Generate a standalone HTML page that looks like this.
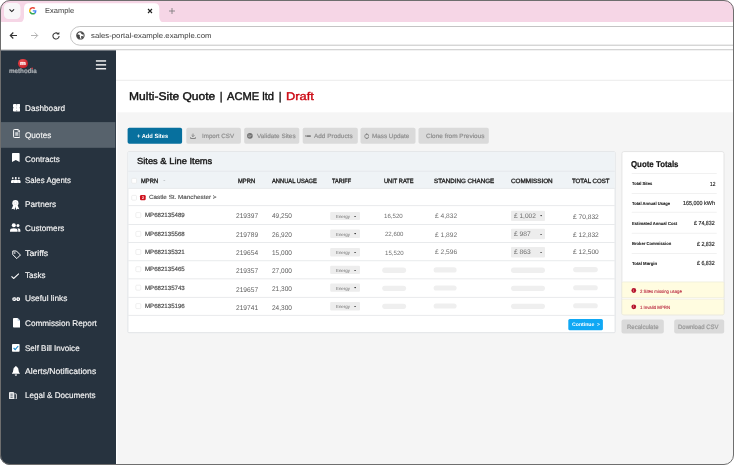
<!DOCTYPE html>
<html><head><meta charset="utf-8"><title>Example</title>
<style>
*{box-sizing:border-box;margin:0;padding:0}
html,body{width:734px;height:465px;overflow:hidden;background:#fff;font-family:"Liberation Sans",sans-serif;text-rendering:geometricPrecision}
.a{position:absolute}
.t{position:absolute;white-space:nowrap;transform-origin:0 0;line-height:0}
.t i{display:inline-block;width:0;height:20px}
#frame{will-change:transform;position:absolute;left:0;top:0;width:734px;height:465px;border-radius:10px;overflow:hidden;background:#fff}
#edge{position:absolute;left:0;top:0;width:734px;height:465px;border-radius:10px;border:1.2px solid #6e6e6e;border-bottom-width:1px;pointer-events:none}
</style></head><body>
<div id="frame">
<header id="browser-chrome">
<svg class="a" style="left:-1px;top:-1px" width="736" height="24"><rect x="1.00" y="1.00" width="734.00" height="22.00" rx="0.00" fill="#f6d6e6"/></svg>
<svg class="a" style="left:3px;top:2px" width="19" height="18"><rect x="1.00" y="1.00" width="16.50" height="16.00" rx="4.50" fill="#f8f7f8"/></svg>
<svg class="a" style="left:8.40px;top:8.20px" width="7.60" height="5.70" viewBox="0 0 8 6"><path d="M1.6 1.4 L4 3.8 L6.4 1.4" fill="none" stroke="#222" stroke-width="1.15"/></svg>
<svg class="a" style="left:0.00px;top:0.00px" width="200.00" height="23.00" viewBox="0 0 200 23"><path d="M18.5 22.5 Q24 22.5 24 17 V8.3 Q24 3.3 29 3.3 H154.3 Q159.3 3.3 159.3 8.3 V17 Q159.3 22.5 164.8 22.5 Z" fill="#fff"/></svg>
<svg class="a" style="left:29.40px;top:7.20px" width="7.60" height="7.60" viewBox="0 0 48 48"><path fill="#EA4335" d="M24 9.5c3.54 0 6.71 1.22 9.21 3.6l6.85-6.85C35.9 2.38 30.47 0 24 0 14.62 0 6.51 5.38 2.56 13.22l7.98 6.19C12.43 13.72 17.74 9.5 24 9.5z"/><path fill="#4285F4" d="M46.98 24.55c0-1.57-.15-3.09-.38-4.55H24v9.02h12.94c-.58 2.96-2.26 5.48-4.78 7.18l7.73 6c4.51-4.18 7.09-10.36 7.09-17.65z"/><path fill="#FBBC05" d="M10.53 28.59c-.48-1.45-.76-2.99-.76-4.59s.27-3.14.76-4.59l-7.98-6.19C.92 16.46 0 20.12 0 24c0 3.88.92 7.54 2.56 10.78l7.97-6.19z"/><path fill="#34A853" d="M24 48c6.48 0 11.93-2.13 15.89-5.81l-7.73-6c-2.15 1.45-4.92 2.3-8.16 2.3-6.26 0-11.57-4.22-13.47-9.91l-7.98 6.19C6.51 42.62 14.62 48 24 48z"/></svg>
<div class="t" style="left:44.60px;top:-7px;font-size:7.40px;transform:scaleX(1.0142);color:#3c3c3c;"><i></i>Example</div>
<svg class="a" style="left:147.00px;top:8.00px" width="6.00" height="6.00" viewBox="0 0 6 6"><path d="M1 1 L5 5 M5 1 L1 5" stroke="#222" stroke-width="1.1"/></svg>
<svg class="a" style="left:167.50px;top:7.00px" width="8.00" height="8.00" viewBox="0 0 8 8"><path d="M4 1 V7 M1 4 H7" stroke="#777" stroke-width="0.8"/></svg>
<svg class="a" style="left:-1px;top:21px" width="736" height="30"><rect x="1.00" y="1.00" width="734.00" height="27.30" rx="0.00" fill="#fff"/></svg>
<div class="a" style="left:0.00px;top:49.00px;width:734.00px;height:1.60px;background:linear-gradient(#cfcfcf,#e4e4e4)"></div>
<svg class="a" style="left:9.00px;top:31.00px" width="9.00" height="9.00" viewBox="0 0 9 9"><path d="M8 4.5 H1.5 M4.3 1.5 L1.3 4.5 L4.3 7.5" fill="none" stroke="#333" stroke-width="1.15"/></svg>
<svg class="a" style="left:29.50px;top:31.00px" width="9.00" height="9.00" viewBox="0 0 9 9"><path d="M1 4.5 H7.5 M4.7 1.5 L7.7 4.5 L4.7 7.5" fill="none" stroke="#aaa" stroke-width="0.9"/></svg>
<svg class="a" style="left:50.50px;top:30.50px" width="10.00" height="10.00" viewBox="0 0 10 10"><path d="M8.1 5 A3.1 3.1 0 1 1 7 2.6" fill="none" stroke="#333" stroke-width="1.05"/><path d="M5.6 3.6 H8.3 V0.9 Z" fill="#333"/></svg>
<svg class="a" style="left:69px;top:25px" width="712" height="22"><rect x="1.50" y="1.50" width="709.00" height="18.70" rx="9.35" fill="#fff" stroke="#c4c4c4" stroke-width="1.00"/></svg>
<svg class="a" style="left:75.90px;top:31.30px" width="8.80" height="8.80" viewBox="0 0 100 100"><circle cx="50" cy="50" r="42" fill="#fff" stroke="#444" stroke-width="12"/><path d="M14 36 C26 42 36 38 42 46 C48 54 38 60 44 68 C48 74 46 84 44 90 C24 86 10 68 10 50 Z" fill="#444"/><path d="M52 10 C46 22 60 24 62 32 C64 42 78 40 88 36 C82 20 68 10 52 10 Z" fill="#444"/><path d="M60 58 C70 54 80 58 84 66 C78 78 70 84 62 86 C58 76 56 66 60 58 Z" fill="#444"/></svg>
<div class="t" style="left:90.90px;top:18px;font-size:7.30px;transform:scaleX(1.0654);color:#3c3c3c;"><i></i>sales-portal-example.example.com</div>
</header>
<nav id="sidebar">
<svg class="a" style="left:-1px;top:49px" width="118" height="418"><rect x="1.00" y="1.40" width="116.00" height="415.60" rx="0.00" fill="#27333f"/></svg>
<svg class="a" style="left:-1px;top:121px" width="118" height="28"><rect x="1.00" y="1.10" width="115.30" height="25.70" rx="0.00" fill="#57626c"/></svg>
<div class="a" style="left:18.40px;top:58.70px;width:9.20px;height:9.20px;border-radius:50%;background:radial-gradient(circle at 40% 35%,#ee5a5a,#c8202a 70%)"></div>
<div class="t" style="left:20.10px;top:45px;font-size:5.60px;transform:scaleX(1.1648);color:#fff;font-weight:bold;-webkit-text-stroke:0.2px;"><i></i>m</div>
<div class="t" style="left:8.70px;top:53px;font-size:6.60px;transform:scaleX(0.9476);color:#a8adb2;font-weight:bold;-webkit-text-stroke:0.2px;"><i></i>methodia</div>
<svg class="a" style="left:30px;top:66px" width="4" height="4"><rect x="1.50" y="1.60" width="1.40" height="1.40" rx="0.00" fill="#d0323c"/></svg>
<svg class="a" style="left:94px;top:59px" width="14" height="4"><rect x="1.90" y="1.20" width="10.20" height="1.50" rx="0.00" fill="#ececec"/></svg>
<svg class="a" style="left:94px;top:63px" width="14" height="4"><rect x="1.90" y="1.10" width="10.20" height="1.50" rx="0.00" fill="#ececec"/></svg>
<svg class="a" style="left:94px;top:67px" width="14" height="4"><rect x="1.90" y="1.00" width="10.20" height="1.50" rx="0.00" fill="#ececec"/></svg>
<div class="t" style="left:25.00px;top:91px;font-size:8.20px;transform:scaleX(0.9971);color:#f6f6f6;-webkit-text-stroke:0.15px #f6f6f6;"><i></i>Dashboard</div>
<div class="t" style="left:25.00px;top:118px;font-size:8.20px;transform:scaleX(0.9948);color:#f6f6f6;-webkit-text-stroke:0.15px #f6f6f6;"><i></i>Quotes</div>
<div class="t" style="left:25.00px;top:142px;font-size:8.20px;transform:scaleX(0.9974);color:#f6f6f6;-webkit-text-stroke:0.15px #f6f6f6;"><i></i>Contracts</div>
<div class="t" style="left:25.00px;top:163px;font-size:8.20px;transform:scaleX(0.9610);color:#f6f6f6;-webkit-text-stroke:0.15px #f6f6f6;"><i></i>Sales Agents</div>
<div class="t" style="left:25.00px;top:187px;font-size:8.20px;transform:scaleX(1.0100);color:#f6f6f6;-webkit-text-stroke:0.15px #f6f6f6;"><i></i>Partners</div>
<div class="t" style="left:25.00px;top:211px;font-size:8.20px;transform:scaleX(0.9964);color:#f6f6f6;-webkit-text-stroke:0.15px #f6f6f6;"><i></i>Customers</div>
<div class="t" style="left:25.00px;top:236px;font-size:8.20px;transform:scaleX(1.0727);color:#f6f6f6;-webkit-text-stroke:0.15px #f6f6f6;"><i></i>Tariffs</div>
<div class="t" style="left:25.00px;top:258px;font-size:8.20px;transform:scaleX(0.9733);color:#f6f6f6;-webkit-text-stroke:0.15px #f6f6f6;"><i></i>Tasks</div>
<div class="t" style="left:25.00px;top:281px;font-size:8.20px;transform:scaleX(1.0113);color:#f6f6f6;-webkit-text-stroke:0.15px #f6f6f6;"><i></i>Useful links</div>
<div class="t" style="left:25.00px;top:306px;font-size:8.20px;transform:scaleX(1.0000);color:#f6f6f6;-webkit-text-stroke:0.15px #f6f6f6;"><i></i>Commission Report</div>
<div class="t" style="left:25.00px;top:331px;font-size:8.20px;transform:scaleX(0.9838);color:#f6f6f6;-webkit-text-stroke:0.15px #f6f6f6;"><i></i>Self Bill Invoice</div>
<div class="t" style="left:25.00px;top:354px;font-size:8.20px;transform:scaleX(1.0500);color:#f6f6f6;-webkit-text-stroke:0.15px #f6f6f6;"><i></i>Alerts/Notifications</div>
<div class="t" style="left:25.00px;top:378px;font-size:8.20px;transform:scaleX(0.9880);color:#f6f6f6;-webkit-text-stroke:0.15px #f6f6f6;"><i></i>Legal &amp; Documents</div>
<svg class="a" style="left:12.80px;top:104.20px" width="7.40" height="7.50" viewBox="0 0 74 75"><rect x="0" y="0" width="74" height="75" rx="10" fill="#fff"/><path d="M37 0 V14 M37 61 V75 M0 37.5 H10 M64 37.5 H74" stroke="#27333f" stroke-width="6" opacity=".8"/><path d="M37 26 V49" stroke="#27333f" stroke-width="5" opacity=".45"/></svg>
<svg class="a" style="left:12.70px;top:129.10px" width="7.60" height="9.00" viewBox="0 0 76 90"><path d="M13 5 H50 L71 24 V78 Q71 85 64 85 H13 Q6 85 6 78 V12 Q6 5 13 5 Z" fill="none" stroke="#fff" stroke-width="10" stroke-linejoin="round"/><path d="M50 6 V25 H70" fill="none" stroke="#fff" stroke-width="6"/><rect x="22" y="32" width="32" height="18" fill="#c5cad0"/><rect x="22" y="54" width="32" height="11" fill="#fff"/></svg>
<svg class="a" style="left:12.10px;top:152.60px" width="7.60" height="9.00" viewBox="0 0 76 90"><path d="M7 0 H69 Q76 0 76 7 V90 L38 70 L0 90 V7 Q0 0 7 0 Z" fill="#fff"/></svg>
<svg class="a" style="left:11.00px;top:177.40px" width="9.60" height="6.00" viewBox="0 0 96 60"><rect x="9" y="2" width="17" height="17" rx="7" fill="#fff"/><rect x="39" y="0" width="18" height="19" rx="7" fill="#fff"/><rect x="70" y="2" width="17" height="17" rx="7" fill="#fff"/><path d="M0 56 V44 Q0 28 17 28 Q28 28 31 33 Q36 26 48 26 Q60 26 65 33 Q68 28 79 28 Q96 28 96 44 V56 Q96 60 92 60 H4 Q0 60 0 56 Z" fill="#fff"/><path d="M26 58 V46 M70 58 V46" stroke="#27333f" stroke-width="5" opacity=".55"/></svg>
<svg class="a" style="left:11.40px;top:199.60px" width="8.80" height="10.00" viewBox="0 0 88 100"><circle cx="44" cy="32" r="31" fill="#fff"/><path d="M22 52 L5 92 L24 88 L34 100 L47 62 Z" fill="#fff"/><path d="M66 52 L83 92 L64 88 L54 100 L41 62 Z" fill="#fff"/><circle cx="44" cy="32" r="15" fill="none" stroke="#27333f" stroke-width="5" opacity=".25"/></svg>
<svg class="a" style="left:10.30px;top:223.30px" width="10.40" height="8.80" viewBox="0 0 104 88"><circle cx="38" cy="22" r="20" fill="#fff"/><path d="M0 88 V74 Q0 52 38 52 Q76 52 76 74 V88 Z" fill="#fff"/><circle cx="80" cy="26" r="15" fill="#fff"/><path d="M82 88 V72 Q82 60 74 53 Q104 52 104 74 V88 Z" fill="#fff"/></svg>
<svg class="a" style="left:12.00px;top:249.90px" width="9.00" height="9.20" viewBox="0 0 90 92"><path d="M8 10 H44 L84 50 L48 86 L8 46 Z" fill="none" stroke="#fff" stroke-width="10" stroke-linejoin="round"/><circle cx="28" cy="30" r="8" fill="#fff"/></svg>
<svg class="a" style="left:11.30px;top:272.50px" width="8.40" height="6.20" viewBox="0 0 84 62"><path d="M5 34 L27 55 L79 6" fill="none" stroke="#fff" stroke-width="11"/></svg>
<svg class="a" style="left:11.80px;top:296.60px" width="8.40" height="4.20" viewBox="0 0 84 42"><path d="M36 8 H21 Q8 8 8 21 Q8 34 21 34 H36 M48 8 H63 Q76 8 76 21 Q76 34 63 34 H48 M26 21 H58" fill="none" stroke="#fff" stroke-width="12"/></svg>
<svg class="a" style="left:12.60px;top:318.40px" width="7.40" height="9.50" viewBox="0 0 74 95"><path d="M8 0 H46 L74 28 V87 Q74 95 66 95 H8 Q0 95 0 87 V8 Q0 0 8 0 Z" fill="#fff"/><path d="M46 0 V28 H74 Z" fill="#b9cfe2"/></svg>
<svg class="a" style="left:12.10px;top:344.30px" width="7.60" height="7.80" viewBox="0 0 76 78"><rect x="0" y="0" width="76" height="78" rx="8" fill="#fff"/><path d="M16 40 L32 56 L62 20" fill="none" stroke="#1685c9" stroke-width="11"/></svg>
<svg class="a" style="left:12.00px;top:366.40px" width="7.80" height="9.80" viewBox="0 0 78 98"><path d="M39 0 Q46 0 46 8 Q66 14 66 42 Q66 62 78 72 V78 H0 V72 Q12 62 12 42 Q12 14 32 8 Q32 0 39 0 Z" fill="#fff"/><path d="M27 84 H51 Q51 97 39 97 Q27 97 27 84 Z" fill="#fff"/></svg>
<svg class="a" style="left:9.40px;top:391.50px" width="7.80" height="7.60" viewBox="0 0 78 76"><path d="M9 4 H43 Q48 4 48 9 V72 H9 Q4 72 4 67 V9 Q4 4 9 4 Z" fill="#dfe2e5" stroke="#fff" stroke-width="9"/><path d="M15 22 H37 M15 38 H37 M15 54 H37" stroke="#27333f" stroke-width="8" opacity=".7"/><path d="M56 18 H70 Q74 18 74 22 V68 Q74 72 70 72 H52" fill="none" stroke="#fff" stroke-width="8"/></svg>
</nav>
<main id="content">
<svg class="a" style="left:115px;top:49px" width="621" height="65"><rect x="1.00" y="1.40" width="619.00" height="61.90" rx="0.00" fill="#fff"/></svg>
<svg class="a" style="left:115px;top:111px" width="621" height="356"><rect x="1.00" y="1.30" width="619.00" height="353.70" rx="0.00" fill="#fff"/></svg>
<svg class="a" style="left:116px;top:111px" width="620" height="356"><rect x="1.30" y="1.30" width="617.70" height="353.70" rx="0.00" fill="#f5f5f5"/></svg>
<svg class="a" style="left:115px;top:78px" width="621" height="4"><rect x="1.00" y="1.80" width="619.00" height="1.00" rx="0.00" fill="#ebebeb"/></svg>
<div class="t" style="left:128.60px;top:80px;font-size:11.20px;transform:scaleX(1.0760);color:#111;-webkit-text-stroke:0.4px;"><i></i>Multi-Site Quote</div>
<div class="t" style="left:219.85px;top:80px;font-size:11.20px;transform:scaleX(1.0000);color:#222;-webkit-text-stroke:0.4px;"><i></i>|</div>
<div class="t" style="left:227.00px;top:80px;font-size:11.20px;transform:scaleX(0.9937);color:#111;-webkit-text-stroke:0.4px;"><i></i>ACME ltd</div>
<div class="t" style="left:278.75px;top:80px;font-size:11.20px;transform:scaleX(1.0000);color:#222;-webkit-text-stroke:0.4px;"><i></i>|</div>
<div class="t" style="left:285.60px;top:80px;font-size:11.20px;transform:scaleX(1.1454);color:#cc0a14;-webkit-text-stroke:0.4px;"><i></i>Draft</div>
<svg class="a" style="left:126px;top:126px" width="58" height="19"><rect x="1.60" y="1.70" width="54.50" height="16.10" rx="1.80" fill="#07709e"/></svg>
<div class="t" style="left:136.90px;top:118px;font-size:6.00px;transform:scaleX(0.9534);color:#fff;font-weight:bold;"><i></i>+ Add Sites</div>
<svg class="a" style="left:185px;top:126px" width="57" height="19"><rect x="1.30" y="1.70" width="54.60" height="16.10" rx="1.80" fill="#dadada"/></svg>
<div class="t" style="left:201.90px;top:118px;font-size:6.20px;transform:scaleX(1.0018);color:#8f8f8f;-webkit-text-stroke:0.2px;"><i></i>Import CSV</div>
<svg class="a" style="left:243px;top:126px" width="58" height="19"><rect x="1.20" y="1.70" width="55.10" height="16.10" rx="1.80" fill="#dadada"/></svg>
<div class="t" style="left:256.80px;top:118px;font-size:6.20px;transform:scaleX(1.0333);color:#8f8f8f;-webkit-text-stroke:0.2px;"><i></i>Validate Sites</div>
<svg class="a" style="left:301px;top:126px" width="58" height="19"><rect x="1.70" y="1.70" width="55.10" height="16.10" rx="1.80" fill="#dadada"/></svg>
<div class="t" style="left:314.20px;top:118px;font-size:6.20px;transform:scaleX(1.0397);color:#8f8f8f;-webkit-text-stroke:0.2px;"><i></i>Add Products</div>
<svg class="a" style="left:359px;top:126px" width="58" height="19"><rect x="1.50" y="1.70" width="55.00" height="16.10" rx="1.80" fill="#dadada"/></svg>
<div class="t" style="left:371.70px;top:118px;font-size:6.20px;transform:scaleX(1.0211);color:#8f8f8f;-webkit-text-stroke:0.2px;"><i></i>Mass Update</div>
<svg class="a" style="left:417px;top:126px" width="73" height="19"><rect x="1.50" y="1.70" width="70.30" height="16.10" rx="1.80" fill="#dadada"/></svg>
<div class="t" style="left:425.90px;top:118px;font-size:6.20px;transform:scaleX(1.0433);color:#8f8f8f;-webkit-text-stroke:0.2px;"><i></i>Clone from Previous</div>
<svg class="a" style="left:190.20px;top:133.00px" width="6.00" height="6.00" viewBox="0 0 60 60"><path d="M30 6 V36 M16 23 L30 37 L44 23" fill="none" stroke="#858585" stroke-width="9"/><path d="M6 42 V55 H54 V42" fill="none" stroke="#858585" stroke-width="10"/></svg>
<svg class="a" style="left:247.30px;top:133.00px" width="5.80" height="5.80" viewBox="0 0 58 58"><circle cx="29" cy="29" r="28" fill="#707070"/><path d="M14 31 L25 42 L44 19" fill="none" stroke="#dadada" stroke-width="7"/><path d="M12 21 H30" stroke="#dadada" stroke-width="5"/></svg>
<svg class="a" style="left:305.20px;top:134.90px" width="5.80" height="2.40" viewBox="0 0 58 24"><path d="M0 6 H8 M0 18 H8" stroke="#7f7f7f" stroke-width="8"/><path d="M14 12 H58" stroke="#808080" stroke-width="20"/></svg>
<svg class="a" style="left:363.70px;top:133.10px" width="5.60" height="6.00" viewBox="0 0 56 60"><circle cx="28" cy="33" r="21" fill="none" stroke="#808080" stroke-width="8"/><path d="M20 2 L38 10 L24 22 Z" fill="#808080"/><path d="M36 64 L18 56 L32 44 Z" fill="#808080"/></svg>
<svg class="a" style="left:126px;top:150px" width="491" height="185"><rect x="1.90" y="1.70" width="487.20" height="181.00" rx="1.00" fill="#fff" stroke="#e0e3e6" stroke-width="1.00"/></svg>
<svg class="a" style="left:127px;top:151px" width="489" height="39"><rect x="1.20" y="1.00" width="486.60" height="36.30" rx="0.00" fill="#eff3f6"/></svg>
<svg class="a" style="left:127px;top:169px" width="489" height="4"><rect x="1.20" y="1.80" width="486.60" height="0.80" rx="0.00" fill="#e3e7ea"/></svg>
<div class="t" style="left:137.00px;top:144px;font-size:8.80px;transform:scaleX(1.0618);color:#1a1a1a;-webkit-text-stroke:0.4px;"><i></i>Sites &amp; Line Items</div>
<div class="t" style="left:141.10px;top:163px;font-size:6.20px;transform:scaleX(0.9367);color:#222;-webkit-text-stroke:0.32px;"><i></i>MPRN</div>
<div class="t" style="left:237.70px;top:163px;font-size:6.20px;transform:scaleX(0.9422);color:#222;-webkit-text-stroke:0.32px;"><i></i>MPRN</div>
<div class="t" style="left:271.90px;top:163px;font-size:6.20px;transform:scaleX(0.9307);color:#222;-webkit-text-stroke:0.32px;"><i></i>ANNUAL USAGE</div>
<div class="t" style="left:331.50px;top:163px;font-size:6.20px;transform:scaleX(0.8994);color:#222;-webkit-text-stroke:0.32px;"><i></i>TARIFF</div>
<div class="t" style="left:384.00px;top:163px;font-size:6.20px;transform:scaleX(0.9207);color:#222;-webkit-text-stroke:0.32px;"><i></i>UNIT RATE</div>
<div class="t" style="left:433.90px;top:163px;font-size:6.20px;transform:scaleX(1.0080);color:#222;-webkit-text-stroke:0.32px;"><i></i>STANDING CHANGE</div>
<div class="t" style="left:511.00px;top:163px;font-size:6.20px;transform:scaleX(1.0284);color:#222;-webkit-text-stroke:0.32px;"><i></i>COMMISSION</div>
<div class="t" style="left:572.00px;top:163px;font-size:6.20px;transform:scaleX(0.9836);color:#222;-webkit-text-stroke:0.32px;"><i></i>TOTAL COST</div>
<svg class="a" style="left:163.30px;top:179.80px" width="2.60" height="1.60" viewBox="0 0 6 4"><path d="M0 0 H6 L3 4 Z" fill="#c5c9cc"/></svg>
<svg class="a" style="left:127px;top:186px" width="489" height="4"><rect x="1.20" y="1.90" width="486.60" height="0.90" rx="0.00" fill="#e6e8ea"/></svg>
<svg class="a" style="left:127px;top:204px" width="489" height="4"><rect x="1.20" y="1.20" width="486.60" height="0.90" rx="0.00" fill="#e6e8ea"/></svg>
<svg class="a" style="left:127px;top:223px" width="489" height="3"><rect x="1.20" y="1.00" width="486.60" height="0.90" rx="0.00" fill="#e6e8ea"/></svg>
<svg class="a" style="left:127px;top:241px" width="489" height="3"><rect x="1.20" y="1.10" width="486.60" height="0.90" rx="0.00" fill="#e6e8ea"/></svg>
<svg class="a" style="left:127px;top:259px" width="489" height="4"><rect x="1.20" y="1.30" width="486.60" height="0.90" rx="0.00" fill="#e6e8ea"/></svg>
<svg class="a" style="left:127px;top:277px" width="489" height="4"><rect x="1.20" y="1.40" width="486.60" height="0.90" rx="0.00" fill="#e6e8ea"/></svg>
<svg class="a" style="left:127px;top:295px" width="489" height="4"><rect x="1.20" y="1.90" width="486.60" height="0.90" rx="0.00" fill="#e6e8ea"/></svg>
<svg class="a" style="left:127px;top:313px" width="489" height="4"><rect x="1.20" y="1.90" width="486.60" height="0.90" rx="0.00" fill="#e6e8ea"/></svg>
<svg class="a" style="left:130px;top:177px" width="8" height="8"><rect x="1.70" y="1.40" width="4.80" height="4.80" rx="1.00" fill="#fff" stroke="#e4e4e4" stroke-width="0.60"/></svg>
<svg class="a" style="left:130px;top:194px" width="8" height="8"><rect x="1.70" y="1.40" width="4.80" height="4.80" rx="1.00" fill="#fff" stroke="#e4e4e4" stroke-width="0.60"/></svg>
<svg class="a" style="left:139px;top:194px" width="8" height="8"><rect x="1.00" y="1.10" width="5.70" height="5.10" rx="1.20" fill="#cf1420"/></svg>
<div class="t" style="left:141.90px;top:179px;font-size:3.80px;transform:scaleX(0.8990);color:#fff;font-weight:bold;"><i></i>2</div>
<div class="t" style="left:148.80px;top:179px;font-size:5.90px;transform:scaleX(1.0709);color:#4a4a4a;-webkit-text-stroke:0.12px;"><i></i>Castle St. Manchester &gt;</div>
<svg class="a" style="left:134px;top:211px" width="9" height="8"><rect x="1.80" y="1.60" width="5.00" height="5.00" rx="1.00" fill="#fff" stroke="#e4e4e4" stroke-width="0.60"/></svg>
<div class="t" style="left:144.80px;top:197px;font-size:6.10px;transform:scaleX(1.0029);color:#404040;-webkit-text-stroke:0.14px;"><i></i>MP682135489</div>
<div class="t" style="left:236.00px;top:198px;font-size:6.80px;transform:scaleX(0.9739);color:#626262;"><i></i>219397</div>
<div class="t" style="left:272.00px;top:198px;font-size:6.80px;transform:scaleX(0.9568);color:#626262;"><i></i>49,250</div>
<svg class="a" style="left:329px;top:210px" width="32" height="11"><rect x="1.20" y="1.90" width="29.80" height="8.10" rx="1.00" fill="#ededed"/></svg>
<div class="t" style="left:335.90px;top:198px;font-size:4.40px;transform:scaleX(0.9970);color:#6e6e6e;"><i></i>Energy</div>
<svg class="a" style="left:354.10px;top:215.60px" width="2.20" height="1.50" viewBox="0 0 6 4"><path d="M0 0 H6 L3 4 Z" fill="#444"/></svg>
<div class="t" style="left:384.00px;top:198px;font-size:6.20px;transform:scaleX(0.9914);color:#707070;"><i></i>16,520</div>
<div class="t" style="left:434.80px;top:198px;font-size:6.60px;transform:scaleX(1.0036);color:#6a6a6a;"><i></i>£ 4,832</div>
<svg class="a" style="left:510px;top:209px" width="36" height="13"><rect x="1.00" y="1.70" width="34.00" height="10.30" rx="1.00" fill="#ededed"/></svg>
<div class="t" style="left:514.40px;top:198px;font-size:6.60px;transform:scaleX(0.9945);color:#6a6a6a;"><i></i>£ 1,002</div>
<svg class="a" style="left:539.90px;top:215.35px" width="2.20" height="1.50" viewBox="0 0 6 4"><path d="M0 0 H6 L3 4 Z" fill="#555"/></svg>
<div class="t" style="left:573.10px;top:199px;font-size:6.60px;transform:scaleX(1.0042);color:#5e5e5e;"><i></i>£ 70,832</div>
<svg class="a" style="left:134px;top:230px" width="9" height="8"><rect x="1.80" y="1.40" width="5.00" height="5.00" rx="1.00" fill="#fff" stroke="#e4e4e4" stroke-width="0.60"/></svg>
<div class="t" style="left:144.80px;top:216px;font-size:6.10px;transform:scaleX(1.0029);color:#404040;-webkit-text-stroke:0.14px;"><i></i>MP682135568</div>
<div class="t" style="left:236.00px;top:217px;font-size:6.80px;transform:scaleX(0.9739);color:#626262;"><i></i>219789</div>
<div class="t" style="left:272.00px;top:217px;font-size:6.80px;transform:scaleX(0.9568);color:#626262;"><i></i>26,920</div>
<svg class="a" style="left:329px;top:228px" width="32" height="11"><rect x="1.20" y="1.50" width="29.80" height="8.40" rx="1.00" fill="#ededed"/></svg>
<div class="t" style="left:335.90px;top:216px;font-size:4.40px;transform:scaleX(0.9970);color:#6e6e6e;"><i></i>Energy</div>
<svg class="a" style="left:354.10px;top:233.35px" width="2.20" height="1.50" viewBox="0 0 6 4"><path d="M0 0 H6 L3 4 Z" fill="#444"/></svg>
<div class="t" style="left:384.70px;top:216px;font-size:6.20px;transform:scaleX(0.9756);color:#707070;"><i></i>22,600</div>
<div class="t" style="left:434.80px;top:217px;font-size:6.60px;transform:scaleX(1.0036);color:#6a6a6a;"><i></i>£ 1,892</div>
<svg class="a" style="left:510px;top:227px" width="36" height="14"><rect x="1.00" y="1.70" width="34.00" height="10.60" rx="1.00" fill="#ededed"/></svg>
<div class="t" style="left:514.40px;top:216px;font-size:6.60px;transform:scaleX(1.0111);color:#6a6a6a;"><i></i>£ 987</div>
<svg class="a" style="left:539.90px;top:233.50px" width="2.20" height="1.50" viewBox="0 0 6 4"><path d="M0 0 H6 L3 4 Z" fill="#555"/></svg>
<div class="t" style="left:573.10px;top:217px;font-size:6.60px;transform:scaleX(1.0042);color:#5e5e5e;"><i></i>£ 12,832</div>
<svg class="a" style="left:134px;top:248px" width="9" height="8"><rect x="1.80" y="1.50" width="5.00" height="5.00" rx="1.00" fill="#fff" stroke="#e4e4e4" stroke-width="0.60"/></svg>
<div class="t" style="left:144.80px;top:234px;font-size:6.10px;transform:scaleX(1.0029);color:#404040;-webkit-text-stroke:0.14px;"><i></i>MP682135321</div>
<div class="t" style="left:236.00px;top:235px;font-size:6.80px;transform:scaleX(0.9739);color:#626262;"><i></i>219654</div>
<div class="t" style="left:272.00px;top:235px;font-size:6.80px;transform:scaleX(0.9568);color:#626262;"><i></i>15,000</div>
<svg class="a" style="left:329px;top:247px" width="32" height="11"><rect x="1.20" y="1.10" width="29.80" height="8.30" rx="1.00" fill="#ededed"/></svg>
<div class="t" style="left:335.90px;top:234px;font-size:4.40px;transform:scaleX(0.9970);color:#6e6e6e;"><i></i>Energy</div>
<svg class="a" style="left:354.10px;top:251.90px" width="2.20" height="1.50" viewBox="0 0 6 4"><path d="M0 0 H6 L3 4 Z" fill="#444"/></svg>
<div class="t" style="left:384.50px;top:235px;font-size:6.20px;transform:scaleX(0.9861);color:#707070;"><i></i>15,520</div>
<div class="t" style="left:434.80px;top:234px;font-size:6.60px;transform:scaleX(1.0036);color:#6a6a6a;"><i></i>£ 2,596</div>
<svg class="a" style="left:510px;top:245px" width="36" height="14"><rect x="1.00" y="1.90" width="34.00" height="10.60" rx="1.00" fill="#ededed"/></svg>
<div class="t" style="left:514.40px;top:234px;font-size:6.60px;transform:scaleX(1.0111);color:#6a6a6a;"><i></i>£ 863</div>
<svg class="a" style="left:539.90px;top:251.70px" width="2.20" height="1.50" viewBox="0 0 6 4"><path d="M0 0 H6 L3 4 Z" fill="#555"/></svg>
<div class="t" style="left:573.10px;top:234px;font-size:6.60px;transform:scaleX(1.0042);color:#5e5e5e;"><i></i>£ 12,500</div>
<svg class="a" style="left:134px;top:265px" width="9" height="8"><rect x="1.80" y="1.70" width="5.00" height="5.00" rx="1.00" fill="#fff" stroke="#e4e4e4" stroke-width="0.60"/></svg>
<div class="t" style="left:144.80px;top:251px;font-size:6.10px;transform:scaleX(1.0029);color:#404040;-webkit-text-stroke:0.14px;"><i></i>MP682135465</div>
<div class="t" style="left:236.00px;top:253px;font-size:6.80px;transform:scaleX(0.9739);color:#626262;"><i></i>219357</div>
<div class="t" style="left:272.00px;top:253px;font-size:6.80px;transform:scaleX(0.9568);color:#626262;"><i></i>27,000</div>
<svg class="a" style="left:329px;top:264px" width="32" height="12"><rect x="1.20" y="1.80" width="29.80" height="8.30" rx="1.00" fill="#ededed"/></svg>
<div class="t" style="left:335.90px;top:252px;font-size:4.40px;transform:scaleX(0.9970);color:#6e6e6e;"><i></i>Energy</div>
<svg class="a" style="left:354.10px;top:269.60px" width="2.20" height="1.50" viewBox="0 0 6 4"><path d="M0 0 H6 L3 4 Z" fill="#444"/></svg>
<svg class="a" style="left:381px;top:266px" width="27" height="8"><rect x="1.20" y="1.50" width="23.90" height="5.40" rx="2.70" fill="#efefef"/></svg>
<svg class="a" style="left:432px;top:266px" width="26" height="8"><rect x="1.60" y="1.20" width="23.00" height="5.40" rx="2.70" fill="#efefef"/></svg>
<svg class="a" style="left:510px;top:266px" width="36" height="8"><rect x="1.00" y="1.50" width="34.00" height="5.40" rx="2.70" fill="#efefef"/></svg>
<svg class="a" style="left:572px;top:265px" width="27" height="9"><rect x="1.10" y="1.90" width="24.70" height="5.40" rx="2.70" fill="#efefef"/></svg>
<svg class="a" style="left:134px;top:283px" width="9" height="9"><rect x="1.80" y="2.20" width="5.00" height="5.00" rx="1.00" fill="#fff" stroke="#e4e4e4" stroke-width="0.60"/></svg>
<div class="t" style="left:144.80px;top:270px;font-size:6.10px;transform:scaleX(1.0029);color:#404040;-webkit-text-stroke:0.14px;"><i></i>MP682135743</div>
<div class="t" style="left:236.00px;top:272px;font-size:6.80px;transform:scaleX(0.9739);color:#626262;"><i></i>219657</div>
<div class="t" style="left:272.00px;top:271px;font-size:6.80px;transform:scaleX(0.9568);color:#626262;"><i></i>21,300</div>
<svg class="a" style="left:329px;top:282px" width="32" height="11"><rect x="1.20" y="1.40" width="29.80" height="8.40" rx="1.00" fill="#ededed"/></svg>
<div class="t" style="left:335.90px;top:270px;font-size:4.40px;transform:scaleX(0.9970);color:#6e6e6e;"><i></i>Energy</div>
<svg class="a" style="left:354.10px;top:287.25px" width="2.20" height="1.50" viewBox="0 0 6 4"><path d="M0 0 H6 L3 4 Z" fill="#444"/></svg>
<svg class="a" style="left:381px;top:284px" width="27" height="8"><rect x="1.20" y="1.80" width="23.90" height="5.10" rx="2.55" fill="#efefef"/></svg>
<svg class="a" style="left:432px;top:284px" width="26" height="8"><rect x="1.60" y="1.50" width="23.00" height="5.10" rx="2.55" fill="#efefef"/></svg>
<svg class="a" style="left:510px;top:284px" width="36" height="8"><rect x="1.00" y="1.80" width="34.00" height="5.10" rx="2.55" fill="#efefef"/></svg>
<svg class="a" style="left:572px;top:284px" width="27" height="8"><rect x="1.10" y="1.20" width="24.70" height="5.10" rx="2.55" fill="#efefef"/></svg>
<svg class="a" style="left:134px;top:302px" width="9" height="8"><rect x="1.80" y="1.60" width="5.00" height="5.00" rx="1.00" fill="#fff" stroke="#e4e4e4" stroke-width="0.60"/></svg>
<div class="t" style="left:144.80px;top:288px;font-size:6.10px;transform:scaleX(1.0029);color:#404040;-webkit-text-stroke:0.14px;"><i></i>MP682135196</div>
<div class="t" style="left:236.00px;top:290px;font-size:6.80px;transform:scaleX(0.9739);color:#626262;"><i></i>219741</div>
<div class="t" style="left:272.00px;top:290px;font-size:6.80px;transform:scaleX(0.9568);color:#626262;"><i></i>24,300</div>
<svg class="a" style="left:329px;top:301px" width="32" height="11"><rect x="1.20" y="1.10" width="29.80" height="8.30" rx="1.00" fill="#ededed"/></svg>
<div class="t" style="left:335.90px;top:288px;font-size:4.40px;transform:scaleX(0.9970);color:#6e6e6e;"><i></i>Energy</div>
<svg class="a" style="left:354.10px;top:305.90px" width="2.20" height="1.50" viewBox="0 0 6 4"><path d="M0 0 H6 L3 4 Z" fill="#444"/></svg>
<svg class="a" style="left:381px;top:302px" width="27" height="8"><rect x="1.20" y="1.80" width="23.90" height="5.10" rx="2.55" fill="#efefef"/></svg>
<svg class="a" style="left:432px;top:302px" width="26" height="8"><rect x="1.60" y="1.50" width="23.00" height="5.10" rx="2.55" fill="#efefef"/></svg>
<svg class="a" style="left:510px;top:302px" width="36" height="8"><rect x="1.00" y="1.80" width="34.00" height="5.10" rx="2.55" fill="#efefef"/></svg>
<svg class="a" style="left:572px;top:302px" width="27" height="8"><rect x="1.10" y="1.20" width="24.70" height="5.10" rx="2.55" fill="#efefef"/></svg>
<svg class="a" style="left:567px;top:318px" width="37" height="14"><rect x="1.30" y="1.00" width="34.60" height="11.20" rx="1.50" fill="#10a8f4"/></svg>
<div class="t" style="left:572.20px;top:306px;font-size:5.00px;transform:scaleX(1.0340);color:#fff;font-weight:bold;"><i></i>Continue</div>
<div class="t" style="left:597.00px;top:306px;font-size:5.00px;transform:scaleX(0.9589);color:#fff;font-weight:bold;"><i></i>&gt;</div>
<svg class="a" style="left:620px;top:150px" width="106" height="167"><rect x="1.90" y="1.60" width="102.10" height="163.20" rx="2.00" fill="#fff" stroke="#e4e4e4" stroke-width="1.00"/></svg>
<svg class="a" style="left:620px;top:280px" width="106" height="19"><rect x="1.95" y="1.95" width="102.00" height="15.70" rx="1.15" fill="#fffce0" stroke="#ecebd8" stroke-width="0.70"/></svg>
<svg class="a" style="left:620px;top:297px" width="106" height="20"><rect x="1.95" y="2.15" width="102.00" height="15.70" rx="1.15" fill="#fffce0" stroke="#ecebd8" stroke-width="0.70"/></svg>
<div class="t" style="left:630.90px;top:147px;font-size:8.50px;transform:scaleX(0.9256);color:#111;font-weight:bold;-webkit-text-stroke:0.2px;"><i></i>Quote Totals</div>
<svg class="a" style="left:630px;top:172px" width="88" height="3"><rect x="1.70" y="1.15" width="85.00" height="0.70" rx="0.00" fill="#ebebeb"/></svg>
<svg class="a" style="left:630px;top:192px" width="88" height="3"><rect x="1.70" y="1.15" width="85.00" height="0.70" rx="0.00" fill="#ebebeb"/></svg>
<svg class="a" style="left:630px;top:210px" width="88" height="4"><rect x="1.70" y="1.85" width="85.00" height="0.70" rx="0.00" fill="#ebebeb"/></svg>
<svg class="a" style="left:630px;top:231px" width="88" height="4"><rect x="1.70" y="1.85" width="85.00" height="0.70" rx="0.00" fill="#ebebeb"/></svg>
<svg class="a" style="left:630px;top:252px" width="88" height="3"><rect x="1.70" y="1.15" width="85.00" height="0.70" rx="0.00" fill="#ebebeb"/></svg>
<div class="t" style="left:631.70px;top:165px;font-size:4.40px;transform:scaleX(0.9214);color:#222;font-weight:bold;-webkit-text-stroke:0.1px;"><i></i>Total Sites</div>
<div class="t" style="left:709.50px;top:166px;font-size:5.90px;transform:scaleX(0.8228);color:#222;-webkit-text-stroke:0.15px;"><i></i>12</div>
<div class="t" style="left:631.70px;top:185px;font-size:4.40px;transform:scaleX(0.9413);color:#222;font-weight:bold;-webkit-text-stroke:0.1px;"><i></i>Total Annual Usage</div>
<div class="t" style="left:682.90px;top:185px;font-size:5.90px;transform:scaleX(0.9204);color:#222;-webkit-text-stroke:0.15px;"><i></i>165,000 kWh</div>
<div class="t" style="left:631.70px;top:205px;font-size:4.40px;transform:scaleX(0.9417);color:#222;font-weight:bold;-webkit-text-stroke:0.1px;"><i></i>Estimated Annual Cost</div>
<div class="t" style="left:694.20px;top:205px;font-size:5.90px;transform:scaleX(0.9013);color:#222;-webkit-text-stroke:0.15px;"><i></i>£ 74,832</div>
<div class="t" style="left:631.70px;top:225px;font-size:4.40px;transform:scaleX(0.9399);color:#222;font-weight:bold;-webkit-text-stroke:0.1px;"><i></i>Broker Commission</div>
<div class="t" style="left:697.20px;top:226px;font-size:5.90px;transform:scaleX(0.8992);color:#222;-webkit-text-stroke:0.15px;"><i></i>£ 2,832</div>
<div class="t" style="left:631.70px;top:245px;font-size:4.40px;transform:scaleX(0.9757);color:#222;font-weight:bold;-webkit-text-stroke:0.1px;"><i></i>Total Margin</div>
<div class="t" style="left:697.20px;top:245px;font-size:5.90px;transform:scaleX(0.8992);color:#222;-webkit-text-stroke:0.15px;"><i></i>£ 6,832</div>
<svg class="a" style="left:630px;top:287px" width="8" height="7"><rect x="1.40" y="1.10" width="4.80" height="4.80" rx="2.40" fill="#b5142c"/></svg>
<div class="t" style="left:633.30px;top:272px;font-size:3.60px;transform:scaleX(0.8341);color:#f3c9cf;font-weight:bold;"><i></i>!</div>
<div class="t" style="left:639.80px;top:273px;font-size:4.50px;transform:scaleX(0.9572);color:#b8263e;-webkit-text-stroke:0.1px;"><i></i>2 Sites missing usage</div>
<svg class="a" style="left:630px;top:303px" width="8" height="8"><rect x="1.40" y="1.40" width="4.80" height="4.80" rx="2.40" fill="#b5142c"/></svg>
<div class="t" style="left:633.30px;top:288px;font-size:3.60px;transform:scaleX(0.8341);color:#f3c9cf;font-weight:bold;"><i></i>!</div>
<div class="t" style="left:639.80px;top:289px;font-size:4.50px;transform:scaleX(0.9597);color:#b8263e;-webkit-text-stroke:0.1px;"><i></i>1 Invalid MPRN</div>
<svg class="a" style="left:620px;top:318px" width="45" height="17"><rect x="1.50" y="1.50" width="42.30" height="13.90" rx="2.00" fill="#dadada"/></svg>
<svg class="a" style="left:673px;top:318px" width="53" height="17"><rect x="1.20" y="1.50" width="50.00" height="13.90" rx="2.00" fill="#dadada"/></svg>
<div class="t" style="left:626.70px;top:309px;font-size:6.30px;transform:scaleX(0.9569);color:#969696;-webkit-text-stroke:0.2px;"><i></i>Recalculate</div>
<div class="t" style="left:678.40px;top:309px;font-size:6.30px;transform:scaleX(0.9480);color:#969696;-webkit-text-stroke:0.2px;"><i></i>Download CSV</div>
</main>
</div>
<div id="edge"></div>
</body></html>
